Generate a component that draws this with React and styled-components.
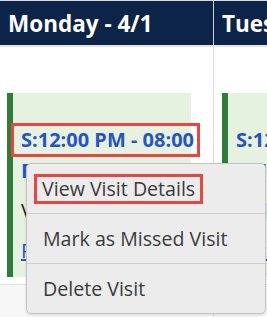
import React from 'react'
import styled, { createGlobalStyle } from 'styled-components'

const GlobalStyle = createGlobalStyle`
  body {
    margin: 0;
    font-family: "Open Sans", "Noto Sans", sans-serif;
    background: #f7f7f7;
  }
`

const Board = styled.div`
  position: relative;
  width: 267px;
  height: 317px;
  overflow: hidden;
  background: #f7f7f7;
`

const HeaderRow = styled.div`
  display: grid;
  grid-template-columns: 214px 1fr;
  border-top: 1px solid #d9d9d9;
  border-bottom: 2px solid #e4e4e4;
  background: #0b2447;
`

const HeaderCell = styled.div`
  height: 44px;
  display: flex;
  align-items: center;
  padding-left: 8px;
  color: #fff;
  font-size: 22.5px;
  font-weight: 700;
  white-space: nowrap;
  overflow: hidden;
  border-right: ${p => (p.$divider ? '1px solid #c9ced6' : 'none')};
`

const BodyRow = styled.div`
  display: grid;
  grid-template-columns: 214px 1fr;
  height: 237px;
  background: #fff;
  border-bottom: 1px solid #e0e0e0;
`

const DayCell = styled.div`
  padding: 46px 0 0 ${p => p.$pad}px;
  border-right: ${p => (p.$divider ? '1px solid #dcdcdc' : 'none')};
  overflow: hidden;
`

const FootRow = styled.div`
  display: grid;
  grid-template-columns: 214px 1fr;
  height: 40px;
`

const FootCell = styled.div`
  border-right: ${p => (p.$divider ? '1px solid #dcdcdc' : 'none')};
`

const Card = styled.div`
  width: ${p => p.$width}px;
  height: 184px;
  box-sizing: border-box;
  background: #e6f2e0;
  border-left: 6px solid #2e7d3b;
  padding: 33px 0 0 1px;
  display: flex;
  flex-direction: column;
  align-items: flex-start;
  white-space: nowrap;
`

const Time = styled.span`
  display: inline-block;
  height: 28px;
  line-height: 28px;
  padding: 0 3px 0 7px;
  color: #2754c5;
  font-size: 20px;
  font-weight: 700;
  outline: ${p => (p.$marked ? '3px solid #e8463e' : 'none')};
`

const Line = styled.div`
  height: 28px;
  line-height: 28px;
  margin-top: ${p => p.$gap}px;
  padding-left: 7px;
  font-size: 20px;
  font-weight: ${p => (p.$bold ? 700 : 400)};
  color: ${p => p.$color};
  text-decoration: ${p => (p.$link ? 'underline' : 'none')};
`

const Menu = styled.div`
  position: absolute;
  left: 26px;
  top: 163px;
  width: 240px;
  box-sizing: border-box;
  background: #ececec;
  border: 1px solid #c4c4c4;
  border-radius: 5px;
  box-shadow: 0 1px 3px rgba(0, 0, 0, 0.12);
`

const MenuItem = styled.div`
  height: 49px;
  display: flex;
  align-items: center;
  padding-left: 16px;
  font-size: 19.6px;
  color: #3b3b3b;
  border-top: ${p => (p.$first ? 'none' : '1px solid #cdcdcd')};
`

const Marked = styled.span`
  display: inline-block;
  line-height: 24px;
  padding: 0 5px;
  margin-left: -6px;
  outline: 3px solid #e8463e;
`

const App = () => {
  return (
    <Board>
      <GlobalStyle />
      <HeaderRow>
        <HeaderCell $divider>Monday - 4/1</HeaderCell>
        <HeaderCell>Tuesday - 4/2</HeaderCell>
      </HeaderRow>
      <BodyRow>
        <DayCell $divider $pad={7}>
          <Card $width={184}>
            <Time $marked>S:12:00 PM - 08:00</Time>
            <Line $gap={3} $bold $color="#2754c5">PM</Line>
            <Line $gap={12} $color="#222">Visit</Line>
            <Line $gap={12} $link $color="#2754c5">Patient</Line>
          </Card>
        </DayCell>
        <DayCell $pad={8}>
          <Card $width={184}>
            <Time>S:12:00 PM - 08:00</Time>
            <Line $gap={3} $bold $color="#2754c5">PM</Line>
            <Line $gap={12} $color="#222">Visit</Line>
            <Line $gap={12} $link $color="#2754c5">Patient</Line>
          </Card>
        </DayCell>
      </BodyRow>
      <FootRow>
        <FootCell $divider />
        <FootCell />
      </FootRow>
      <Menu>
        <MenuItem $first>
          <Marked>View Visit Details</Marked>
        </MenuItem>
        <MenuItem>Mark as Missed Visit</MenuItem>
        <MenuItem>Delete Visit</MenuItem>
      </Menu>
    </Board>
  )
}

export default App
